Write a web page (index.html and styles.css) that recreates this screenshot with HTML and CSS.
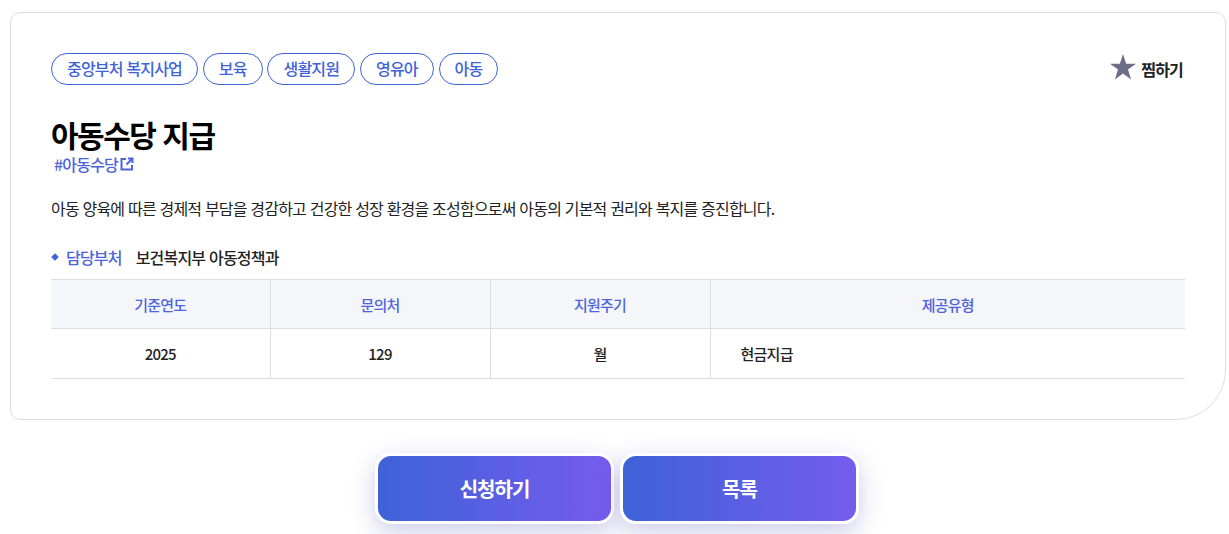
FILE: index.html
```html
<!DOCTYPE html>
<html lang="ko">
<head>
<meta charset="utf-8">
<title>아동수당 지급</title>
<link rel="stylesheet" href="styles.css">
</head>
<body>
<section class="card">
  <div class="top">
    <ul class="tags">
      <li class="tag">중앙부처 복지사업</li>
      <li class="tag">보육</li>
      <li class="tag">생활지원</li>
      <li class="tag">영유아</li>
      <li class="tag">아동</li>
    </ul>
    <div class="fav">
      <svg class="star" viewBox="0 0 26 26" width="26" height="26"><path d="M13 0l3.200 9.700H26l-8 5.900 3.100 9.900L13 19.400l-8.100 6.100 3.100-9.900-8-5.900h9.800z"/></svg>
      <span>찜하기</span>
    </div>
  </div>
  <h1 class="title">아동수당 지급</h1>
  <a class="hash">#아동수당<svg class="ext" viewBox="0 0 14 14" width="14" height="14"><path d="M6 2H1.500v10.500H12V8M8 1.500h4.500V6M12.500 1.500L6.500 7.500" fill="none" stroke="currentColor" stroke-width="2"/></svg></a>
  <p class="desc">아동 양육에 따른 경제적 부담을 경감하고 건강한 성장 환경을 조성함으로써 아동의 기본적 권리와 복지를 증진합니다.</p>
  <div class="dept"><i class="bullet"></i><span class="dept-label">담당부처</span><span class="dept-name">보건복지부 아동정책과</span></div>
  <table class="info">
    <thead>
      <tr><th class="c0">기준연도</th><th class="c1">문의처</th><th class="c1">지원주기</th><th>제공유형</th></tr>
    </thead>
    <tbody>
      <tr><td>2025</td><td>129</td><td>월</td><td class="left">현금지급</td></tr>
    </tbody>
  </table>
</section>
<div class="actions">
  <a class="btn">신청하기</a>
  <a class="btn">목록</a>
</div>
</body>
</html>
```
FILE: styles.css
```css
* { box-sizing: border-box; }
html, body { margin: 0; padding: 0; }
body {
  background: #fff;
  color: #222;
  font-family: "Noto Sans CJK KR", "Noto Sans", sans-serif;
  height: 534px;
  overflow: hidden;
}
.card {
  width: 1216px;
  height: 408px;
  margin: 12px 0 0 10px;
  padding: 40px 40px 0;
  border: 1px solid #ddd;
  border-radius: 10px 10px 50px 10px;
}
.top { display: flex; justify-content: space-between; align-items: center; height: 32px; }
.tags { display: flex; gap: 4.8px; list-style: none; margin: 0; padding: 0; }
.tag {
  height: 32px;
  padding: 0 15px;
  border: 1px solid #3f63d8;
  border-radius: 16px;
  color: #3f63d8;
  font-size: 16px;
  font-weight: 500;
  letter-spacing: -0.8px;
  line-height: 29px;
}
.fav { display: flex; align-items: center; gap: 5px; font-size: 16px; font-weight: 700; letter-spacing: -0.8px; margin-right: 2px; }
.star { fill: #6b6e86; margin-bottom: 4px; }
.title { margin: 31px 0 0; font-size: 30px; font-weight: 700; line-height: 36px; color: #000; letter-spacing: -1.5px; }
.hash {
  display: flex;
  align-items: center;
  gap: 2px;
  margin: 2px 0 0 3px;
  height: 20px;
  font-size: 16px;
  font-weight: 500;
  color: #4e63dc;
  letter-spacing: -0.8px;
}
.ext { color: #4e63dc; }
.desc { margin: 22px 0 0; font-size: 16px; line-height: 24px; color: #222; letter-spacing: -0.8px; }
.dept { display: flex; align-items: center; margin-top: 25px; height: 24px; font-size: 16px; font-weight: 500; letter-spacing: -0.8px; }
.bullet { width: 6px; height: 6px; background: #3f63d8; transform: rotate(45deg) scale(.9); margin: 0 9px 0 1px; }
.dept-label { color: #4e63dc; margin-right: 14px; margin-left: -1px; }
.dept-name { color: #222; }
.info {
  width: 1134px;
  margin-top: 10px;
  border-collapse: collapse;
  table-layout: fixed;
  font-size: 15px;
  letter-spacing: -0.75px;
}
.info th, .info td { border: 1px solid #ddd; border-left: 0; text-align: center; font-weight: 500; padding: 0; }
.info th:last-child, .info td:last-child { border-right: 0; }
.info th { height: 49px; background: #f5f6fa; color: #4e63dc; }
.info td { height: 50px; color: #222; }
.c0 { width: 219px; }
.c1 { width: 220px; }
.info td.left { text-align: left; padding-left: 30px; }
.actions { display: flex; justify-content: center; gap: 6px; margin-top: 33px; padding-left: 5px; }
.btn {
  width: 239px;
  height: 71px;
  display: flex;
  align-items: center;
  justify-content: center;
  border: 3px solid #fff;
  border-radius: 16px;
  background: linear-gradient(90deg, #3d62d8, #765ced);
  background-origin: border-box;
  color: #fff;
  font-size: 20px;
  font-weight: 700;
  letter-spacing: -1px;
  box-shadow: 0 8px 24px rgba(60, 60, 170, .26);
}
```
